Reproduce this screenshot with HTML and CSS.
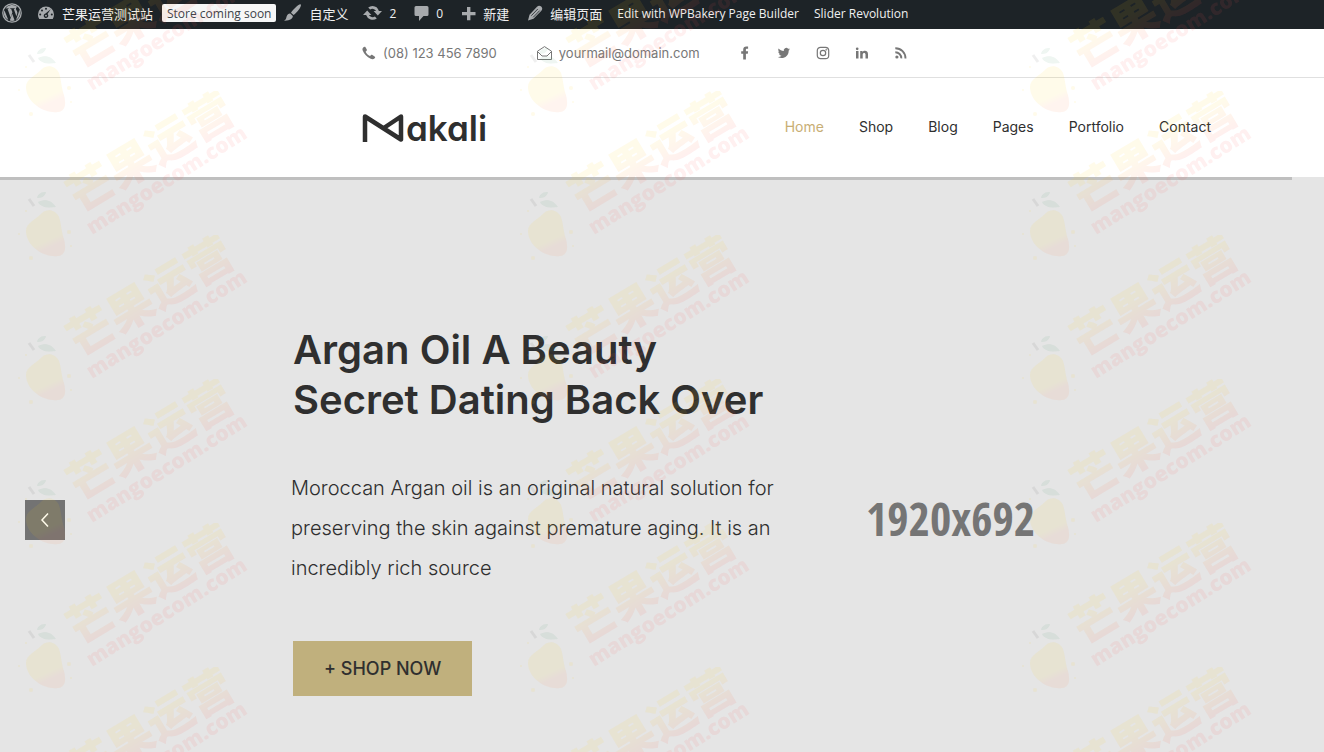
FILE: index.html
```html
<!DOCTYPE html>
<html lang="en">
<head>
    <meta charset="UTF-8">
    <meta name="viewport" content="width=device-width, initial-scale=1.0">
    <title>Makali</title>
    <link rel="stylesheet" href="styles.css">
</head>
<body>
<div class="admin-bar">
    <a href="#" class="wp-logo" aria-label="WordPress">
        <svg width="20" height="20" viewBox="0 0 20 20"><circle cx="10" cy="10" r="9.2" fill="none" stroke="#a7aaad" stroke-width="1.3"/><path fill="#a7aaad" d="M2.4 7.2a8 8 0 0 0 3.9 9.9zM3.5 5.4a8 8 0 0 1 12-1.3c-1.2.2-1.8 1-1.5 2.1.3 1 1.5 2 1.3 3.7-.1 1-.6 2.2-.9 3.3l-2.6-7.3.9-.1c.4-.1.3-.6 0-.6H8.300c-.5 0-.5.6 0 .6l.9.1 1.200 3.400-1.800 5.100-3-8.500.9-.1c.4-.1.3-.6 0-.6zM10.200 10.700l2.400 6.800c-1.500.6-3.200.6-4.800.1zM17.100 6.300a8 8 0 0 1-3.100 10.600l2.500-7c.5-1.300.7-2.500.6-3.600z"/></svg>
    </a>
    <a href="#" class="site-name">
        <svg width="18" height="18" viewBox="0 0 18 18"><path fill="#a7aaad" d="M9 2.500a8 8 0 0 0-8 8c0 1.700.5 3.200 1.300 4.500h13.400a8.500 8.500 0 0 0 1.300-4.500 8 8 0 0 0-8-8z"/><g fill="#1d2327"><circle cx="9" cy="4.800" r="1"/><circle cx="5" cy="6.500" r="1"/><circle cx="3.200" cy="10.500" r="1"/><circle cx="14.800" cy="10.500" r="1"/><path d="M13.700 5.200 10.500 10a2.300 2.300 0 1 1-2-.5z"/></g><circle cx="9" cy="11.700" r=".9" fill="#a7aaad"/></svg>
        芒果运营测试站
    </a>
    <a href="#" class="badge">Store coming soon</a>
    <a href="#" class="customize">
        <svg width="19" height="18" viewBox="0 0 19 18"><path fill="#a7aaad" d="M17.700.500c.7.6-.2 2.800-1.600 4.800-1.600 2.200-3.900 4.700-5.500 5.800L8 8.700c1-1.700 3.300-4.300 5.300-6 1.900-1.600 3.700-2.800 4.400-2.200zM7.200 9.500l2.600 2.400c.3 2.300-2.200 5-8.800 4.800 2-1 2-2.300 2.600-4.300.7-2 2-3 3.600-2.900z"/></svg>
        自定义
    </a>
    <a href="#" class="updates">
        <svg width="19" height="18" viewBox="0 0 19 18"><path fill="#a7aaad" d="M9.500 2a7 7 0 0 1 6.400 5H19l-4.200 4.400L10.600 7h2.500a4.400 4.400 0 0 0-6-1.600L5.200 3.500A7 7 0 0 1 9.500 2zM4.200 6.600 8.400 11H5.900a4.400 4.400 0 0 0 6 1.600l1.900 1.900A7 7 0 0 1 3.100 11H0z"/></svg>
        2
    </a>
    <a href="#" class="comments">
        <svg width="15" height="18" viewBox="0 0 15 18"><path fill="#a7aaad" d="M2 2h11a1.500 1.500 0 0 1 1.500 1.500v7A1.500 1.500 0 0 1 13 12H9.500l-4.500 5v-5H2A1.500 1.500 0 0 1 .5 10.500v-7A1.500 1.500 0 0 1 2 2z"/></svg>
        0
    </a>
    <a href="#" class="new">
        <svg width="15" height="18" viewBox="0 0 15 18"><path fill="#a7aaad" d="M6 3h3.400v5H14.500v3.200H9.400v5H6v-5H1V8h5z"/></svg>
        新建
    </a>
    <a href="#" class="edit">
        <svg width="16" height="18" viewBox="0 0 16 18"><path fill="#a7aaad" d="M10 2.800c1.400-1.500 3-1.300 4.200-.2s1.500 2.700.2 4.100L6.500 14.700 1 16.500l1.500-5.800z"/><path d="M4.300 11.700 10.800 5M6.200 13.300l6.500-6.700" stroke="#1d2327" stroke-width=".8" fill="none"/></svg>
        编辑页面
    </a>
    <a href="#">Edit with WPBakery Page Builder</a>
    <a href="#">Slider Revolution</a>
</div>

<div class="top-bar">
    <a href="#" class="phone">
        <svg width="14" height="14" viewBox="0 0 14 14"><path fill="#777" d="M1.200 1.500C2 .7 3 .4 3.500 1.200l1.300 2.300c.3.600.1 1.100-.4 1.500l-.8.700c.7 1.700 2.400 3.500 4.400 4.400l.9-.9c.5-.5 1-.5 1.500-.2l2.200 1.400c.8.500.7 1.100.1 1.800-1 1.100-2.500 1.300-4 .6C5 11.200 2 8 .7 4.600.3 3.300.3 2.400 1.200 1.500z"/></svg>
        (08) 123 456 7890
    </a>
    <a href="#" class="mail">
        <svg width="15" height="14" viewBox="0 0 15 14" fill="none" stroke="#777"><path d="M.5 5.200 7.500.6l7 4.600v8.300H.5zM.5 5.500l4.500 4.500h5l4.500-4.500"/></svg>
        yourmail@domain.com
    </a>
    <div class="social">
        <a href="#" aria-label="Facebook"><svg width="14" height="14" viewBox="0 0 14 14"><path fill="#777" d="M5.200 13.500V7.700H3.200V5.300h2V3.600C5.200 1.600 6.400.5 8.200.5h1.900v2.300H8.900c-.8 0-1 .4-1 1v1.500h2.200l-.3 2.400H7.900v5.800z"/></svg></a>
        <a href="#" aria-label="Twitter"><svg width="14" height="14" viewBox="0 0 14 14"><path fill="#777" d="M13 3.200c-.4.200-.9.400-1.400.4.500-.3.900-.8 1.100-1.400-.5.300-1 .5-1.600.6a2.500 2.500 0 0 0-4.300 2.300C4.700 5 2.900 4 1.600 2.500c-.7 1.200-.3 2.600.8 3.400-.4 0-.8-.1-1.200-.3 0 1.200.9 2.200 2 2.500-.4.100-.7.100-1.100 0 .3 1 1.200 1.700 2.400 1.700A5.200 5.200 0 0 1 .8 11c4.700 2.900 11-.1 10.900-6.500.5-.3 1-.8 1.300-1.300z"/></svg></a>
        <a href="#" aria-label="Instagram"><svg width="14" height="14" viewBox="0 0 14 14" fill="none" stroke="#777" stroke-width="1.200"><rect x="1.300" y="1.300" width="11.400" height="11.400" rx="3.200"/><circle cx="7" cy="7" r="2.700"/><circle cx="10.400" cy="3.600" r=".3"/></svg></a>
        <a href="#" aria-label="LinkedIn"><svg width="14" height="14" viewBox="0 0 14 14"><path fill="#777" d="M1 5h2.500v7.500H1zM2.200 1.500a1.300 1.300 0 1 1 0 2.700 1.300 1.300 0 0 1 0-2.700zM5.200 5h2.300v1.100c1.100-2 5.500-1.900 5.500 1.800v4.600h-2.500V8.600c0-2.300-2.800-2-2.800 0v3.900H5.200z"/></svg></a>
        <a href="#" aria-label="RSS"><svg width="14" height="14" viewBox="0 0 14 14"><circle cx="2.900" cy="11" r="1.600" fill="#777"/><path d="M1.300 6.200a6 6 0 0 1 6 6.200M1.300 2.200a10 10 0 0 1 10.200 10.200" fill="none" stroke="#777" stroke-width="1.900"/></svg></a>
    </div>
</div>

<header class="header">
    <a href="#" class="logo">
        <svg width="42" height="28" viewBox="0 0 42 28" fill="none" stroke="#2f2f2f" stroke-width="4.500" stroke-linejoin="round"><path d="M3 28V2.500l36 23v-23L22.500 13.500"/></svg>
        <span>akali</span>
    </a>
    <nav class="menu">
        <a href="#" class="active">Home</a>
        <a href="#">Shop</a>
        <a href="#">Blog</a>
        <a href="#">Pages</a>
        <a href="#">Portfolio</a>
        <a href="#">Contact</a>
    </nav>
</header>

<main class="hero">
    <div class="slide-timer"></div>
    <div class="slide">
        <button class="prev" aria-label="Previous slide">
            <svg width="10" height="16" viewBox="0 0 10 16"><path d="M8 1.500 2 8l6 6.500" fill="none" stroke="#fff" stroke-width="1.500"/></svg>
        </button>
        <div class="caption">
            <h1>Argan Oil A Beauty<br>Secret Dating Back Over</h1>
            <p>Moroccan Argan oil is an original natural solution for<br>preserving the skin against premature aging. It is an<br>incredibly rich source</p>
            <a href="#" class="shop-now">+ SHOP NOW</a>
        </div>
        <span class="placeholder">1920x692</span>
    </div>
</main>

<!-- repeating site watermark -->
<svg class="watermark" aria-hidden="true">
    <defs>
        <linearGradient id="mango" x1="0" y1="0" x2="0.4" y2="1">
            <stop offset="0.75" stop-color="#ffd21c"/>
            <stop offset="0.9" stop-color="#ff8a50"/>
        </linearGradient>
        <linearGradient id="letters" x1="0" y1="0" x2="0" y2="1">
            <stop offset="0.4" stop-color="#ffd21c"/>
            <stop offset="0.85" stop-color="#ff5a4c"/>
        </linearGradient>
        <g id="stamp">
            <path fill="url(#mango)" d="M42 122c5-5 14-3 17 4 2 5 2 12 4 19 3 9 4 19-5 20-14 2-32-10-32-25 0-8 9-11 16-18z"/>
            <path fill="#4c9a70" d="M37 107c1-5 5-6 9-6-1 5-5 6-9 6zM38 111c8-4 14-1 18 5-7 1-15 1-18-5z"/>
            <path d="m29 108 5 7" stroke="#555" stroke-width="3"/>
            <g fill="#ffd21c"><circle cx="19" cy="143" r="1"/><circle cx="69" cy="141" r="2"/><circle cx="71" cy="155" r="1"/><circle cx="31" cy="167" r="2"/><circle cx="26" cy="120" r="1"/></g>
            <g transform="translate(80 123) rotate(-31)">
                <text class="mark-cn" fill="url(#letters)">芒果运营</text>
            </g>
            <g transform="translate(92 144) rotate(-32)">
                <text class="mark-en" fill="#ff5a5a">mangoecom.com</text>
            </g>
        </g>
        <pattern id="tile" width="502" height="144" y="91" patternUnits="userSpaceOnUse">
            <use href="#stamp"/>
            <use href="#stamp" y="-144"/>
        </pattern>
    </defs>
    <rect width="100%" height="100%" fill="url(#tile)"/>
</svg>
</body>
</html>
```
FILE: styles.css
```css
* {
    box-sizing: border-box;
}
body {
    margin: 0;
    min-height: 100vh;
    display: flex;
    flex-direction: column;
    font-family: Inter, "Noto Sans CJK SC", sans-serif;
    color: #2f2f2f;
    background: #fff;
}
a {
    color: inherit;
    text-decoration: none;
}
svg {
    flex: none;
}
.admin-bar {
    display: flex;
    align-items: center;
    gap: 15px;
    height: 29px;
    padding: 0 2px 3px;
    background: #1d2327;
    color: #f0f0f1;
    font-family: "Open Sans", "Noto Sans CJK SC", sans-serif;
    font-size: 12px;
    white-space: nowrap;
}
.admin-bar a {
    display: flex;
    align-items: center;
    gap: 7px;
}
.admin-bar .site-name,
.admin-bar .customize,
.admin-bar .new,
.admin-bar .edit {
    font-size: 13px;
}
.admin-bar .comments,
.admin-bar .new,
.admin-bar .edit {
    margin-left: 3px;
}
.admin-bar .badge {
    margin: 0 -8px 0 -6px;
    height: 18px;
    padding: 0 5px;
    border-radius: 2px;
    background: #f6f7f7;
    color: #3c434a;
}
.top-bar {
    display: flex;
    align-items: center;
    height: 49px;
    padding-left: 362px;
    border-bottom: 1px solid #e0e0e0;
    color: #777;
    font-size: 13px;
    white-space: nowrap;
}
.phone,
.mail {
    display: flex;
    align-items: center;
    gap: 7px;
    margin-right: 40px;
}
.mail {
    margin-right: 38px;
}
.social {
    display: flex;
    gap: 25px;
}
.social a,
.social svg {
    display: block;
}
.header {
    display: flex;
    align-items: center;
    justify-content: space-between;
    height: 99px;
    padding: 0 113px 0 362px;
}
.logo {
    display: flex;
    align-items: flex-end;
    gap: 2px;
    font-size: 35px;
    font-weight: 600;
    line-height: 28px;
    font-feature-settings: "cv11";
}
.menu {
    display: flex;
    gap: 35px;
    padding-bottom: 2px;
    font-size: 14px;
}
.menu .active {
    color: #c8ae74;
}
.hero {
    flex: 1;
    background: #e5e5e5;
}
.slide-timer {
    width: 97.6%;
    height: 3px;
    background: #bfbfbf;
}
.slide {
    display: grid;
    grid-template-columns: 266px 575px 1fr;
    align-items: center;
    padding: 145px 25px 16px;
}
.prev {
    display: flex;
    align-items: center;
    justify-content: center;
    width: 40px;
    height: 40px;
    padding: 0;
    border: none;
    background: #737373;
    cursor: pointer;
}
.caption {
    padding-bottom: 18px;
    white-space: nowrap;
}
.caption h1 {
    margin: 0 0 0 2px;
    font-size: 40px;
    font-weight: 600;
    line-height: 50px;
}
.caption p {
    margin: 43px 0 53px;
    font-size: 20px;
    font-weight: 300;
    line-height: 40px;
}
.shop-now {
    display: inline-block;
    margin-left: 2px;
    padding: 0 31px;
    background: #c0b07d;
    font-size: 18px;
    font-weight: 500;
    line-height: 55px;
}
.placeholder {
    padding-bottom: 4px;
    color: #757575;
    font-family: "Liberation Sans Narrow", "Open Sans Condensed", sans-serif;
    font-size: 46px;
    font-weight: 600;
}
.watermark {
    position: fixed;
    inset: 0;
    width: 100%;
    height: 100%;
    opacity: 0.09;
    pointer-events: none;
}
.mark-cn {
    font-family: "Noto Sans CJK SC", sans-serif;
    font-size: 46px;
    font-weight: 900;
}
.mark-en {
    font-family: "Open Sans", sans-serif;
    font-size: 21px;
    font-weight: 800;
}
```
